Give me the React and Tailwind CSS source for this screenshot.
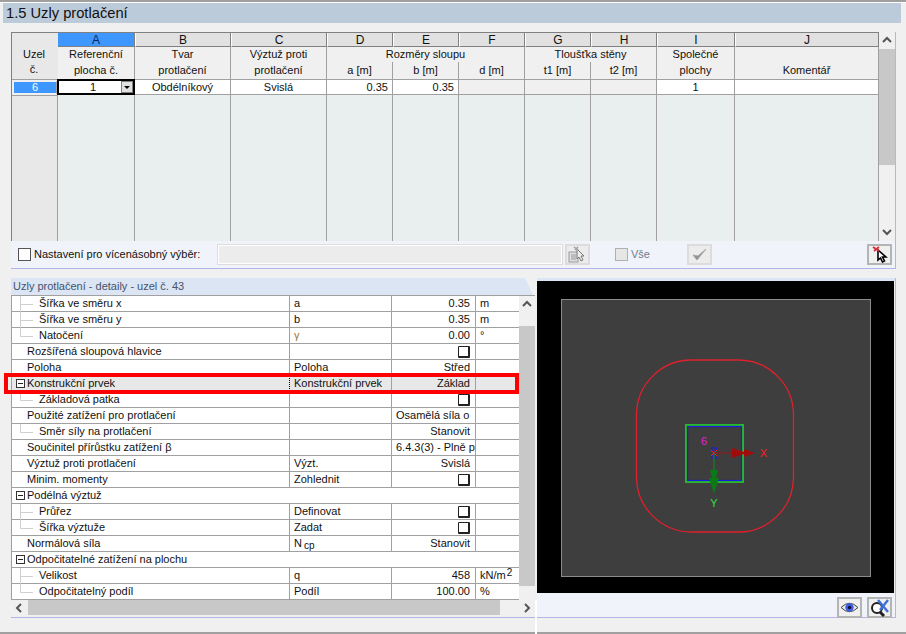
import React from "react";

const font = { fontFamily: '"Liberation Sans", Arial, sans-serif' };

const cols = [
  ["A", 77], ["B", 96], ["C", 96], ["D", 66], ["E", 66], ["F", 66], ["G", 66], ["H", 66], ["I", 78], ["J", 144],
];

function Chev({ dir = "up", className = "" }) {
  const d = { up: "M1 6 L5 2 L9 6", down: "M1 2 L5 6 L9 2", left: "M6 1 L2 5 L6 9", right: "M3 1 L7 5 L3 9" }[dir];
  return (
    <svg width="10" height="10" viewBox="0 0 10 10" className={className}>
      <path d={d} fill="none" stroke="#555" strokeWidth="2" />
    </svg>
  );
}

function LetterHead({ label, w, active }) {
  return (
    <div
      className={`h-[14px] shrink-0 border-r border-b border-[#808080] flex items-center justify-center text-[12px] leading-none ${active ? "bg-[#3d97ff] text-[#0b2a55] border-l-0" : "bg-[#e1e1e1] text-[#111] border-l border-l-white"}`}
      style={{ width: w }}
    >
      {label}
    </div>
  );
}

function HeadTop() {
  const Cell = ({ w, children }) => (
    <div className="shrink-0 h-[15px] flex items-center justify-center border-r border-[#a0a0a0]" style={{ width: w }}>
      {children}
    </div>
  );
  return (
    <div className="flex h-[15px]">
      <Cell w={77}>Referenční</Cell>
      <Cell w={96}>Tvar</Cell>
      <Cell w={96}>Výztuž proti</Cell>
      <Cell w={198}>Rozměry sloupu</Cell>
      <Cell w={132}>Tloušťka stěny</Cell>
      <Cell w={78}>Společné</Cell>
      <Cell w={144}></Cell>
    </div>
  );
}

function HeadBottom() {
  const labels = ["plocha č.", "protlačení", "protlačení", "a [m]", "b [m]", "d [m]", "t1 [m]", "t2 [m]", "plochy", "Komentář"];
  return (
    <div className="flex h-[18px] border-b border-[#a0a0a0]">
      {labels.map((l, i) => (
        <div key={i} className="shrink-0 flex items-center justify-center border-r border-[#a0a0a0]" style={{ width: cols[i][1] }}>
          {l}
        </div>
      ))}
    </div>
  );
}

function DataRow() {
  const vals = [null, "Obdélníkový", "Svislá", "0.35", "0.35", "", "", "", "1", ""];
  return (
    <div className="flex h-[15px] border-b border-[#a0a0a0]">
      {vals.map((v, i) => {
        if (i === 0)
          return (
            <div key={i} className="shrink-0 relative bg-white border-2 border-black flex items-center justify-center -mt-px -ml-px h-[16px] box-border" style={{ width: 78 }}>
              <span className="pr-[6px]">1</span>
              <span className="absolute right-0 top-0 w-[12px] h-[12px] bg-[#e1e1e1] border border-[#808080] flex items-center justify-center">
                <span className="w-0 h-0 border-l-[3px] border-r-[3px] border-t-[3px] border-l-transparent border-r-transparent border-t-black" />
              </span>
            </div>
          );
        const grey = i >= 5 && i <= 7;
        const right = i === 3 || i === 4;
        return (
          <div
            key={i}
            className={`shrink-0 flex items-center border-r border-[#a0a0a0] ${grey ? "bg-[#f0f0f0]" : "bg-white"} ${right ? "justify-end pr-[4px]" : "justify-center"}`}
            style={{ width: cols[i][1] }}
          >
            {v}
          </div>
        );
      })}
    </div>
  );
}

function TopTable() {
  return (
    <div className="flex h-[209px]">
      <div className="w-[47px] shrink-0 bg-[#e8e8e8] border-l border-t border-[#808080] flex flex-col">
        <div className="h-[14px]" />
        <div className="h-[33px] flex flex-col items-center border-b border-[#a0a0a0] leading-[15px] pr-[2px]">
          <span>Uzel</span>
          <span>č.</span>
        </div>
        <div className="h-[15px] bg-[#3d97ff] border-2 border-[#f0f0f0] border-r-[#a0a0a0] text-white flex items-center justify-center">6</div>
        <div className="flex-1 border-t border-[#a0a0a0] border-r border-r-[#a0a0a0]" />
      </div>
      <div className="flex flex-col border-t border-[#808080] w-[821px] shrink-0">
        <div className="flex">
          {cols.map(([l, w], i) => (
            <LetterHead key={l} label={l} w={w} active={i === 0} />
          ))}
        </div>
        <div className="bg-[#f0f0f0] flex flex-col">
          <HeadTop />
          <HeadBottom />
        </div>
        <DataRow />
        <div className="flex-1 flex bg-[#e9eeee]">
          {cols.map(([l, w]) => (
            <div key={l} className="shrink-0 border-r border-[#a0a0a0]" style={{ width: w }} />
          ))}
        </div>
      </div>
      <div className="w-[16px] shrink-0 flex flex-col bg-[#f0f0f0]">
        <div className="h-[17px] flex items-center justify-center"><Chev dir="up" /></div>
        <div className="h-[116px] bg-[#c8c8c8]" />
        <div className="flex-1" />
        <div className="h-[17px] flex items-center justify-center"><Chev dir="down" /></div>
      </div>
    </div>
  );
}

function IconBtn({ children, dim }) {
  return (
    <div className={`w-[25px] h-[21px] shrink-0 flex items-center justify-center border-2 ${dim ? "border-[#dcdcdc] bg-[#ececec]" : "border-[#b4b4b4] bg-[#f0f0f0]"}`}>
      {children}
    </div>
  );
}

function Cursor() {
  return (
    <svg width="17" height="17" viewBox="0 0 17 17">
      <path d="M7 4 L7 14 L9.5 12 L11.5 16 L13.5 15 L11.5 11 L15 11 Z" fill="#fff" stroke="#000" strokeWidth="1.6" />
      <path d="M2 1 L8 5 M8 1 L3 5" stroke="#d8343f" strokeWidth="2" />
    </svg>
  );
}

function Toolbar() {
  return (
    <div className="h-[28px] bg-[#f0f4fa] border-b border-[#b4b4e6] flex items-center pl-[7px] pr-[3px]">
      <span className="w-[13px] h-[13px] border border-[#555] bg-white shrink-0" />
      <span className="ml-[3px] w-[184px] shrink-0 whitespace-nowrap">Nastavení pro vícenásobný výběr:</span>
      <span className="w-[344px] h-[19px] shrink-0 bg-[#ececec] border border-white outline outline-1 outline-[#dcdcdc]" />
      <span className="w-[3px] shrink-0" />
      <IconBtn dim>
        <svg width="19" height="17" viewBox="0 0 19 17">
          <rect x="1" y="6" width="9" height="10" fill="#dedede" stroke="#9a9a9a" />
          <path d="M3 9h5M3 11h5M3 13h5" stroke="#9a9a9a" />
          <path d="M9 3 L9 13 L11 11 L13 15 L15 14 L13 10 L16 10 Z" fill="#eee" stroke="#777" />
          <path d="M6 1 L10 4 M10 1 L7 4" stroke="#a0a0a0" strokeWidth="1.5" />
        </svg>
      </IconBtn>
      <span className="w-[25px] shrink-0" />
      <span className="w-[13px] h-[13px] shrink-0 border border-[#b0b0b0] bg-[#e6e6e6]" />
      <span className="ml-[3px] w-[56px] shrink-0 text-[#6c7a92]">Vše</span>
      <IconBtn dim>
        <svg width="17" height="15" viewBox="0 0 17 15">
          <path d="M2 8 L6 13 L15 2 L7 9 Z" fill="#8f8f8f" stroke="#a8a8a8" />
        </svg>
      </IconBtn>
      <span className="flex-1" />
      <IconBtn><Cursor /></IconBtn>
    </div>
  );
}

const Cb = () => <span className="w-[12px] h-[12px] border-[1.5px] border-r-2 border-b-2 border-[#222] bg-white inline-block rounded-[1px]" />;

const Minus = () => (
  <svg width="9" height="9" viewBox="0 0 9 9" className="absolute left-[4px] top-[3px]">
    <rect x="0.5" y="0.5" width="8" height="8" fill="#fff" stroke="#333" />
    <path d="M2 4.5h5" stroke="#222" />
  </svg>
);

const rows = [
  { t: "Šířka ve směru x", k: "c", b: "a", v: "0.35", u: "m" },
  { t: "Šířka ve směru y", k: "c", b: "b", v: "0.35", u: "m" },
  { t: "Natočení", k: "c", last: true, b: <span className="text-[#a07a3c]">γ</span>, v: "0.00", u: "°" },
  { t: "Rozšířená sloupová hlavice", v: <Cb /> },
  { t: "Poloha", b: "Poloha", v: "Střed" },
  { t: "Konstrukční prvek", m: true, hi: true, b: "Konstrukční prvek", v: "Základ" },
  { t: "Základová patka", k: "c", last: true, v: <Cb /> },
  { t: "Použité zatížení pro protlačení", v: "Osamělá síla o", vl: true },
  { t: "Směr síly na protlačení", k: "c", last: true, v: "Stanovit" },
  { t: "Součinitel přírůstku zatížení β", v: "6.4.3(3) - Plně p", vl: true },
  { t: "Výztuž proti protlačení", b: "Výzt.", v: "Svislá" },
  { t: "Minim. momenty", b: "Zohlednit", v: <Cb /> },
  { t: "Podélná výztuž", m: true, group: true },
  { t: "Průřez", k: "c", b: "Definovat", v: <Cb /> },
  { t: "Šířka výztuže", k: "c", last: true, b: "Zadat", v: <Cb /> },
  { t: "Normálová síla", b: <span>N<span className="text-[10px] ml-[2px] relative top-[2px]">cp</span></span>, v: "Stanovit" },
  { t: "Odpočitatelné zatížení na plochu", m: true, group: true },
  { t: "Velikost", k: "c", b: "q", v: "458", u: <span>kN/m<span className="text-[10px] ml-[1px] relative -top-[3px]">2</span></span> },
  { t: "Odpočitatelný podíl", k: "c", last: true, b: "Podíl", v: "100.00", u: "%" },
];

function Tree({ last }) {
  return (
    <svg width="14" height="16" className="absolute left-[8px] top-0" viewBox="0 0 14 16">
      <path d={last ? "M0.5 0 V8.5 H13" : "M0.5 0 V16 M0.5 8.5 H13"} stroke="#d0d0d0" fill="none" />
    </svg>
  );
}

function DetailRow({ r }) {
  const h = r.hi ? "bg-[#e8e8e8]" : "bg-white";
  const textX = r.k === "c" ? "pl-[27px]" : "pl-[15px]";
  if (r.group) {
    return (
      <div className={`h-[16px] flex items-center border-b border-[#a0a0a0] relative ${h} ${textX}`}>
        <Minus />
        <span className="whitespace-nowrap">{r.t}</span>
      </div>
    );
  }
  return (
    <div className={`h-[16px] flex border-b border-[#a0a0a0] ${h}`}>
      <div className={`w-[278px] shrink-0 relative flex items-center whitespace-nowrap border-r ${r.hi ? "border-dotted border-black" : "border-[#a0a0a0]"} ${textX}`}>
        {r.k === "c" && <Tree last={r.last} />}
        {r.m && <Minus />}
        {r.t}
      </div>
      <div className="w-[102px] shrink-0 flex items-center pl-[4px] border-r border-[#a0a0a0] whitespace-nowrap">{r.b}</div>
      <div className={`w-[84px] shrink-0 flex items-center border-r border-[#a0a0a0] whitespace-nowrap ${r.vl ? "pl-[4px]" : "justify-end pr-[5px]"}`}>{r.v}</div>
      <div className="flex-1 flex items-center pl-[4px] whitespace-nowrap">{r.u}</div>
    </div>
  );
}

function Details() {
  return (
    <div className="w-[532px] shrink-0 flex flex-col relative pl-[8px]">
      <div className="h-[17px] bg-[#dbe5f3] text-[#44546e] flex items-center pl-[2px] mr-[2px] [clip-path:polygon(0_0,calc(100%-8px)_0,100%_100%,0_100%)]">Uzly protlačení - detaily - uzel č. 43</div>
      <div className="flex border-t border-[#a0a0a0]">
        <div className="w-[508px] shrink-0 border-l border-[#a0a0a0]">
          {rows.map((r, i) => (
            <DetailRow key={i} r={r} />
          ))}
        </div>
        <div className="w-[16px] shrink-0 flex flex-col bg-[#f0f0f0]">
          <div className="h-[30px] flex justify-center pt-[4px]"><Chev dir="up" /></div>
          <div className="h-[260px] bg-[#c8c8c8]" />
          <div className="flex-1" />
        </div>
      </div>
      <div className="h-[18px] flex items-start bg-[#f0f0f0] border-b border-[#b4b4e6]">
        <div className="w-[17px] h-[15px] flex items-center justify-center"><Chev dir="left" /></div>
        <div className="w-[472px] h-[15px] bg-[#c8c8c8]" />
        <div className="flex-1 h-[15px] flex items-center justify-end pr-[3px]"><Chev dir="right" /></div>
      </div>
    </div>
  );
}

function Drawing() {
  const f = '"Liberation Sans", Arial, sans-serif';
  return (
    <svg width="357" height="312" viewBox="537 281 357 312" className="block">
      <rect x="537" y="281" width="357" height="312" fill="#000" />
      <rect x="561.5" y="299.5" width="309" height="277" fill="#3e3e3e" stroke="#8c8c8c" />
      <rect x="636.5" y="360" width="157" height="172" rx="55" ry="55" fill="none" stroke="#e0202c" strokeWidth="1.3" />
      <rect x="686" y="425" width="57" height="57" fill="none" stroke="#27b82e" strokeWidth="2" />
      <rect x="687.5" y="426.5" width="54" height="54" fill="none" stroke="#1a1ae0" strokeWidth="1.2" />
      <path d="M711 448 h6 l-3 5 l3 5 h-6 l3 -5 Z" fill="none" stroke="#1a1ae0" />
      <path d="M711 450 L717 456 M717 450 L711 456" stroke="#ff2020" strokeWidth="1" />
      <path d="M714 453 H732" stroke="#a01010" strokeWidth="1" />
      <path d="M732 448 L744 452 L744 449 L755 453 L744 457 L744 454 L732 458 Z" fill="#a00c0c" />
      <path d="M714 453 V470" stroke="#0e8e1a" strokeWidth="1" />
      <path d="M710 470 L718 470 L716 478 L719 478 L714 494 L709 478 L712 478 Z" fill="#0a7a14" />
      <text x="763.5" y="457" textAnchor="middle" fontSize="11" fill="#ff2020" fontFamily={f}>X</text>
      <text x="714" y="507" textAnchor="middle" fontSize="11" fill="#30e040" fontFamily={f}>Y</text>
      <text x="704" y="445" textAnchor="middle" fontSize="11" fill="#e020e0" fontFamily={f}>6</text>
    </svg>
  );
}

function Preview() {
  return (
    <div className="flex-1 flex flex-col ml-[2px] border-r border-[#b4b4e6] mr-[10px] relative">
      <div className="h-[3px] bg-[#dbe5f3]" />
      <Drawing />
      <div className="h-[25px] bg-[#f0f4fa] border-b border-[#b4b4e6] flex items-start justify-end gap-[5px] pt-[4px] pr-[3px]">
        <IconBtn>
          <svg width="19" height="13" viewBox="0 0 19 13">
            <path d="M1 6.5 Q9.5 -2 18 6.5 Q9.5 15 1 6.5 Z" fill="#e8e8e8" stroke="#444" />
            <circle cx="9.5" cy="6.5" r="4.2" fill="#3f5fe0" />
            <circle cx="9.5" cy="6.5" r="1.7" fill="#101030" />
          </svg>
        </IconBtn>
        <IconBtn>
          <svg width="21" height="18" viewBox="0 0 21 18">
            <circle cx="8" cy="9" r="5" fill="#fff" stroke="#222" strokeWidth="2" />
            <path d="M11 13 L15 17" stroke="#222" strokeWidth="3" />
            <path d="M9 1 L19 13 M19 1 L11 11" stroke="#3f6fd8" strokeWidth="2.4" />
          </svg>
        </IconBtn>
      </div>
    </div>
  );
}

export default function App() {
  return (
    <div className="w-[906px] h-[634px] bg-[#f0f0f0] overflow-hidden relative flex flex-col text-[11px] text-[#111]" style={font}>
      <div className="h-[3px] bg-[#a0a0a0] shrink-0 border-b border-white" />
      <div className="h-[20px] shrink-0 bg-[#bccbd9] ml-[3px] mr-[5px] flex items-center pl-[3px] pt-[1px] text-[14.7px]">1.5 Uzly protlačení</div>
      <div className="h-[9px] shrink-0" />
      <div className="ml-[11px] mr-[10px] border-r border-[#b4b4e6] shrink-0">
        <TopTable />
        <Toolbar />
      </div>
      <div className="h-[9px] shrink-0" />
      <div className="flex h-[340px] shrink-0 pl-[3px]">
        <Details />
        <Preview />
      </div>
      <div className="flex-1" />
      <div className="h-[2px] bg-[#a0a0a0] shrink-0" />
      <div className="absolute left-[4px] top-[373px] w-[515px] h-[21px] border-4 border-[#ff0000] pointer-events-none" />
      <div className="absolute left-[535px] top-[600px] w-[2px] h-[34px] bg-white" />
    </div>
  );
}
